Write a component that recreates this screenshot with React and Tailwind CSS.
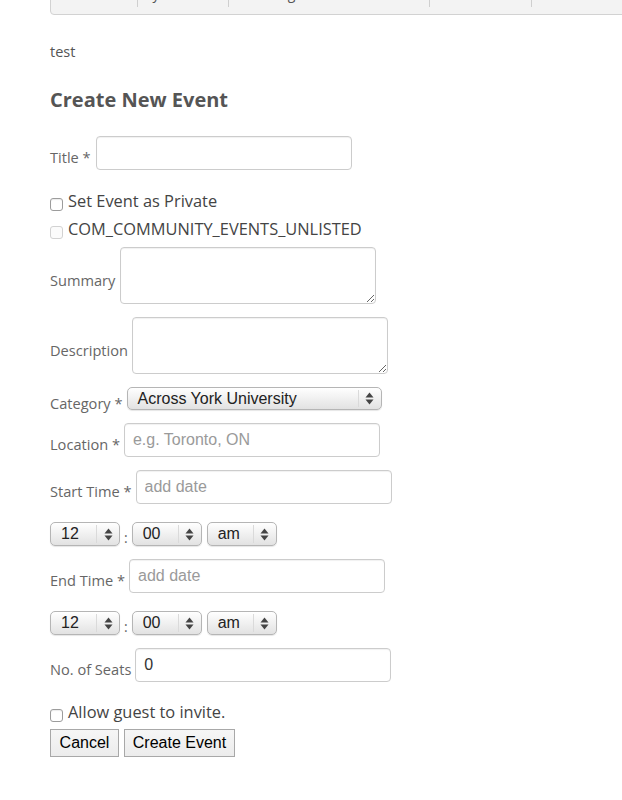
import React from "react";

const OPEN = "font-['Open_Sans',sans-serif]";
const ARIAL = "font-['Liberation_Sans',Arial,sans-serif]";

function Arrows() {
  return (
    <svg width="9" height="13" viewBox="0 0 9 13">
      <path d="M4.5 0.5 L8.5 5.5 L0.5 5.5 Z" fill="#444" />
      <path d="M4.5 12.5 L8.5 7.5 L0.5 7.5 Z" fill="#444" />
    </svg>
  );
}

function Select({ value, wide }) {
  return (
    <div
      className={
        wide
          ? "flex h-[23px] w-[255px] items-stretch rounded-[5px] border border-[#b5b5b5] bg-gradient-to-b from-[#ffffff] to-[#e2e2e2] shadow-[0_1px_1px_rgba(0,0,0,0.1)]"
          : "flex h-[24px] w-[70px] items-stretch rounded-[5px] border border-[#b5b5b5] bg-gradient-to-b from-[#ffffff] to-[#e2e2e2] shadow-[0_1px_1px_rgba(0,0,0,0.1)]"
      }
    >
      <div className={`flex flex-1 items-center pl-[10px] text-[16px] leading-none text-[#222] ${ARIAL}`}>{value}</div>
      <div className="my-[2px] flex w-[23px] items-center justify-center border-l border-[#dadada]">
        <Arrows />
      </div>
    </div>
  );
}

function Check({ light }) {
  return (
    <span
      className={
        light
          ? "mt-[6px] inline-block h-[13px] w-[13px] shrink-0 rounded-[3px] border border-[#d2d2d2] bg-[#fbfbfb]"
          : "mt-[6px] inline-block h-[13px] w-[13px] shrink-0 rounded-[3px] border border-[#9c9c9c] bg-white shadow-[inset_0_1px_1px_rgba(0,0,0,0.08)]"
      }
    />
  );
}

function Label({ children }) {
  return <span className={`pt-[8px] text-[14.6px] leading-[20px] text-[#666] ${OPEN}`}>{children}</span>;
}

const inputCls = `h-[34px] w-[256px] rounded-[4px] border border-[#cccccc] bg-white px-[8px] text-[16px] text-[#333] outline-none shadow-[inset_0_1px_1px_rgba(0,0,0,0.06)] placeholder:text-[#9a9a9a] ${ARIAL}`;
const areaCls = "h-[57px] w-[256px] rounded-[4px] border border-[#cccccc] bg-white outline-none shadow-[inset_0_1px_1px_rgba(0,0,0,0.06)]";

function TimeRow({ className }) {
  return (
    <div className={`flex h-[24px] items-center ${className}`}>
      <Select value="12" />
      <span className={`mx-[4px] pt-[8px] text-[14px] leading-none text-[#666] ${OPEN}`}>:</span>
      <Select value="00" />
      <div className="w-[5px]" />
      <Select value="am" />
    </div>
  );
}

export default function App() {
  return (
    <div className="min-h-[800px] w-[622px] overflow-hidden bg-white">
      <div className="pl-[50px]">
        {/* top bar (bottom edge of a tab bar) */}
        <div className="mt-[-25px] flex h-[40px] w-[640px] items-start rounded-b-[4px] border border-[#d2d2d2] bg-[#f3f3f3]">
          <div className="h-[31px] w-[87px] border-r border-[#cfcfcf]" />
          <div className={`h-[31px] w-[91px] border-r border-[#cfcfcf] pl-[2px] pt-[8px] text-[14px] leading-[20px] text-[#555] ${OPEN}`}>My</div>
          <div className={`h-[31px] w-[201px] border-r border-[#cfcfcf] pl-[21px] pt-[8px] text-[14px] leading-[20px] text-[#555] ${OPEN}`}>Settings</div>
          <div className="h-[31px] w-[102px] border-r border-[#cfcfcf]" />
        </div>

        <div className={`mt-[27px] text-[14.5px] leading-[20px] text-[#555] ${OPEN}`}>test</div>
        <h2 className={`mt-[24px] text-[20px] font-bold leading-[28px] text-[#555] ${OPEN}`}>Create New Event</h2>

        <div className="mt-[22px] flex h-[34px] items-center gap-[5px]">
          <Label>Title *</Label>
          <input className={inputCls} />
        </div>

        <div className="mt-[17px] flex h-[28px] items-center gap-[5px]">
          <Check />
          <span className={`text-[16.4px] leading-[22px] text-[#444] ${OPEN}`}>Set Event as Private</span>
        </div>
        <div className="flex h-[28px] items-center gap-[5px]">
          <Check light />
          <span className={`text-[16.4px] leading-[22px] text-[#444] ${OPEN}`}>COM_COMMUNITY_EVENTS_UNLISTED</span>
        </div>

        <div className="mt-[4px] flex h-[57px] items-center gap-[5px]">
          <Label>Summary</Label>
          <textarea className={areaCls} />
        </div>

        <div className="mt-[13px] flex h-[57px] items-center gap-[4px]">
          <Label>Description</Label>
          <textarea className={areaCls} />
        </div>

        <div className="mt-[13px] flex h-[23px] items-center gap-[4px]">
          <Label>Category *</Label>
          <Select value="Across York University" wide />
        </div>

        <div className="mt-[13px] flex h-[34px] items-center gap-[4px]">
          <Label>Location *</Label>
          <input className={inputCls} placeholder="e.g. Toronto, ON" />
        </div>

        <div className="mt-[13px] flex h-[34px] items-center gap-[4px]">
          <Label>Start Time *</Label>
          <input className={inputCls} placeholder="add date" />
        </div>

        <TimeRow className="mt-[18px]" />

        <div className="mt-[13px] flex h-[34px] items-center gap-[4px]">
          <Label>End Time *</Label>
          <input className={inputCls} placeholder="add date" />
        </div>

        <TimeRow className="mt-[18px]" />

        <div className="mt-[13px] flex h-[34px] items-center gap-[4px]">
          <Label>No. of Seats</Label>
          <input className={inputCls} defaultValue="0" />
        </div>

        <div className="mt-[16px] flex h-[28px] items-center gap-[5px]">
          <Check />
          <span className={`text-[16.4px] leading-[22px] text-[#444] ${OPEN}`}>Allow guest to invite.</span>
        </div>

        <div className="mt-[3px] flex gap-[5px]">
          <button className={`h-[28px] w-[69px] border border-[#a8a8a8] bg-gradient-to-b from-[#f6f6f6] to-[#ececec] text-[16px] text-black ${ARIAL}`}>Cancel</button>
          <button className={`h-[28px] w-[111px] border border-[#a8a8a8] bg-gradient-to-b from-[#f6f6f6] to-[#ececec] text-[16px] text-black ${ARIAL}`}>Create Event</button>
        </div>
      </div>
    </div>
  );
}
